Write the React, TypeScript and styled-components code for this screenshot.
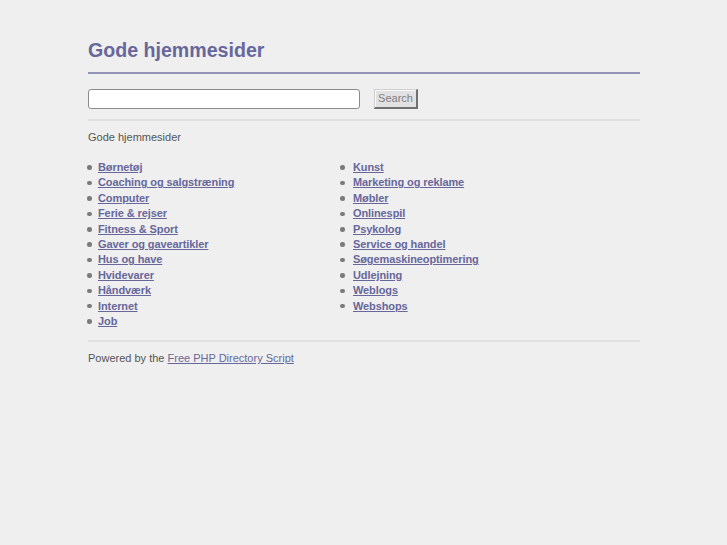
import React from "react";
import styled, { createGlobalStyle } from "styled-components";

const GlobalStyle = createGlobalStyle`
  html, body {
    margin: 0;
    padding: 0;
    background: #efefef;
  }
  body {
    font-family: "Liberation Sans", Arial, sans-serif;
    font-size: 11px;
    color: #555;
  }
`;

const Page = styled.div`
  width: 552px;
  margin: 0 0 0 88px;
  padding-top: 38px;
`;

const Title = styled.h1`
  margin: 0;
  font-size: 19.6px;
  line-height: 24px;
  font-weight: bold;
  color: #67679b;
  padding-bottom: 10px;
  border-bottom: 2px solid #9494b8;
`;

const SearchForm = styled.form`
  display: flex;
  align-items: center;
  gap: 14px;
  padding: 15px 0 10px;
  border-bottom: 2px solid #e0e0e0;
`;

const SearchInput = styled.input`
  box-sizing: border-box;
  width: 272px;
  height: 20px;
  border: 1px solid #8a8a8a;
  border-radius: 3px;
  background: #fff;
  margin: 0;
`;

const SearchButton = styled.button`
  box-sizing: border-box;
  height: 20px;
  width: 44px;
  padding: 0;
  font-family: "Liberation Sans", Arial, sans-serif;
  font-size: 11px;
  color: #808080;
  background: #e2e2e2;
  border-style: solid;
  border-width: 1px 2px 2px 1px;
  border-color: #d0d0d0 #707070 #707070 #d0d0d0;
  box-shadow: inset 1px 1px 0 #f8f8f8;
  margin-top: -1px;
`;

const Intro = styled.p`
  margin: 9px 0 16px;
  font-size: 11px;
  line-height: 14px;
  color: #555;
`;

const Columns = styled.div`
  display: grid;
  grid-template-columns: 252px 1fr;
  padding-bottom: 11px;
  border-bottom: 2px solid #e0e0e0;
`;

const List = styled.ul<{ $gap: number; $shift: number }>`
  margin: 0;
  padding: 0;
  list-style: none;
  li {
    gap: ${(p) => p.$gap}px;
  }
  li::before {
    margin-left: ${(p) => p.$shift}px;
  }
`;

const Item = styled.li`
  display: flex;
  align-items: center;
  height: 15.4px;
  line-height: 15.4px;
  &::before {
    content: "";
    flex-shrink: 0;
    width: 4.5px;
    height: 4.5px;
    border-radius: 50%;
    background: #7a7a7a;
  }
`;

const CatLink = styled.a`
  color: #67679b;
  font-weight: bold;
  text-decoration: underline;
  letter-spacing: -0.1px;
`;

const Footer = styled.p`
  margin: 9px 0 0;
  font-size: 11px;
  line-height: 14px;
  color: #555;
  a {
    color: #67679b;
    text-decoration: underline;
  }
`;

const left = [
  "Børnetøj",
  "Coaching og salgstræning",
  "Computer",
  "Ferie & rejser",
  "Fitness & Sport",
  "Gaver og gaveartikler",
  "Hus og have",
  "Hvidevarer",
  "Håndværk",
  "Internet",
  "Job",
];

const right = [
  "Kunst",
  "Marketing og reklame",
  "Møbler",
  "Onlinespil",
  "Psykolog",
  "Service og handel",
  "Søgemaskineoptimering",
  "Udlejning",
  "Weblogs",
  "Webshops",
];

const App = () => {
  return (
    <>
      <GlobalStyle />
      <Page>
        <Title>Gode hjemmesider</Title>
        <SearchForm onSubmit={(e) => e.preventDefault()}>
          <SearchInput type="text" />
          <SearchButton type="submit">Search</SearchButton>
        </SearchForm>
        <Intro>Gode hjemmesider</Intro>
        <Columns>
          <List $gap={6.5} $shift={-1}>
            {left.map((name) => (
              <Item key={name}>
                <CatLink href="#">{name}</CatLink>
              </Item>
            ))}
          </List>
          <List $gap={8.5} $shift={0}>
            {right.map((name) => (
              <Item key={name}>
                <CatLink href="#">{name}</CatLink>
              </Item>
            ))}
          </List>
        </Columns>
        <Footer>
          Powered by the <a href="#">Free PHP Directory Script</a>
        </Footer>
      </Page>
    </>
  );
};

export default App;
